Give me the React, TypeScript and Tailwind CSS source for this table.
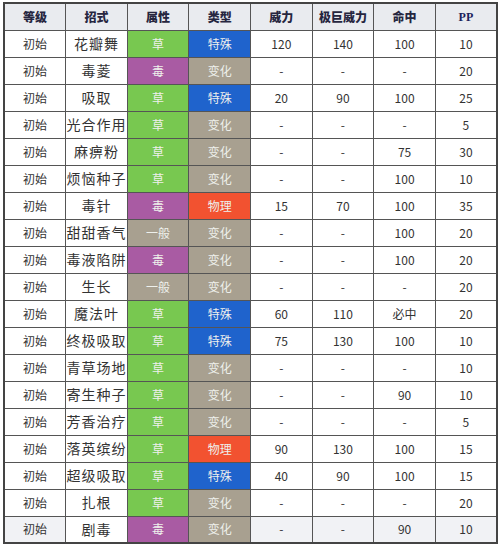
type Cell = { t: string; c: string }

const G = { t: "草", c: "bg-[#78c850]" }
const P = { t: "毒", c: "bg-[#a95ba3]" }
const N = { t: "一般", c: "bg-[#a8a090]" }
const SP = { t: "特殊", c: "bg-[#1f63cc]" }
const ST = { t: "变化", c: "bg-[#a8a090]" }
const PH = { t: "物理", c: "bg-[#f25230]" }

type Row = [string, Cell, Cell, string, string, string, string]

const rows: Row[] = [
  ["花瓣舞", G, SP, "120", "140", "100", "10"],
  ["毒菱", P, ST, "-", "-", "-", "20"],
  ["吸取", G, SP, "20", "90", "100", "25"],
  ["光合作用", G, ST, "-", "-", "-", "5"],
  ["麻痹粉", G, ST, "-", "-", "75", "30"],
  ["烦恼种子", G, ST, "-", "-", "100", "10"],
  ["毒针", P, PH, "15", "70", "100", "35"],
  ["甜甜香气", N, ST, "-", "-", "100", "20"],
  ["毒液陷阱", P, ST, "-", "-", "100", "20"],
  ["生长", N, ST, "-", "-", "-", "20"],
  ["魔法叶", G, SP, "60", "110", "必中", "20"],
  ["终极吸取", G, SP, "75", "130", "100", "10"],
  ["青草场地", G, ST, "-", "-", "-", "10"],
  ["寄生种子", G, ST, "-", "-", "90", "10"],
  ["芳香治疗", G, ST, "-", "-", "-", "5"],
  ["落英缤纷", G, PH, "90", "130", "100", "15"],
  ["超级吸取", G, SP, "40", "90", "100", "15"],
  ["扎根", G, ST, "-", "-", "-", "20"],
  ["剧毒", P, ST, "-", "-", "90", "10"],
]

const headers = ["等级", "招式", "属性", "类型", "威力", "极巨威力", "命中"]

const td = "border border-[#555] h-[27px] p-0 text-center"

export default function App() {
  return (
    <div className="w-[500px] h-[545px] bg-white pt-[2px] pl-[3px]">
      <table
        className="w-[495px] table-fixed border-collapse border-2 border-[#444]"
        style={{ fontFamily: '"Noto Sans CJK SC", "Noto Sans", sans-serif' }}
      >
        <thead>
          <tr className="bg-[#e9ebef]">
            {headers.map((h) => (
              <th key={h} className={`${td} text-[12px] font-black text-[#26263f]`}>
                {h}
              </th>
            ))}
            <th className={`${td} font-['Liberation_Serif',serif] text-[12px] font-bold text-[#1c1f5c]`}>PP</th>
          </tr>
        </thead>
        <tbody>
          {rows.map((r, i) => {
            const last = i === rows.length - 1
            const plain = last ? "bg-[#f1f2f5]" : "bg-white"
            return (
              <tr key={i}>
                <td className={`${td} ${plain} text-[12px] text-[#333]`}>初始</td>
                <td className={`${td} bg-white text-[14px] text-[#333] tracking-[1px]`}>{r[0]}</td>
                <td className={`${td} ${r[1].c} text-[12px] text-[#eef0ec]`}>{r[1].t}</td>
                <td className={`${td} ${r[2].c} text-[12px] text-[#eef0ec]`}>{r[2].t}</td>
                {r.slice(3).map((v, j) => (
                  <td key={j} className={`${td} ${plain} text-[12px] text-[#333]`}>
                    {v}
                  </td>
                ))}
              </tr>
            )
          })}
        </tbody>
      </table>
    </div>
  )
}
